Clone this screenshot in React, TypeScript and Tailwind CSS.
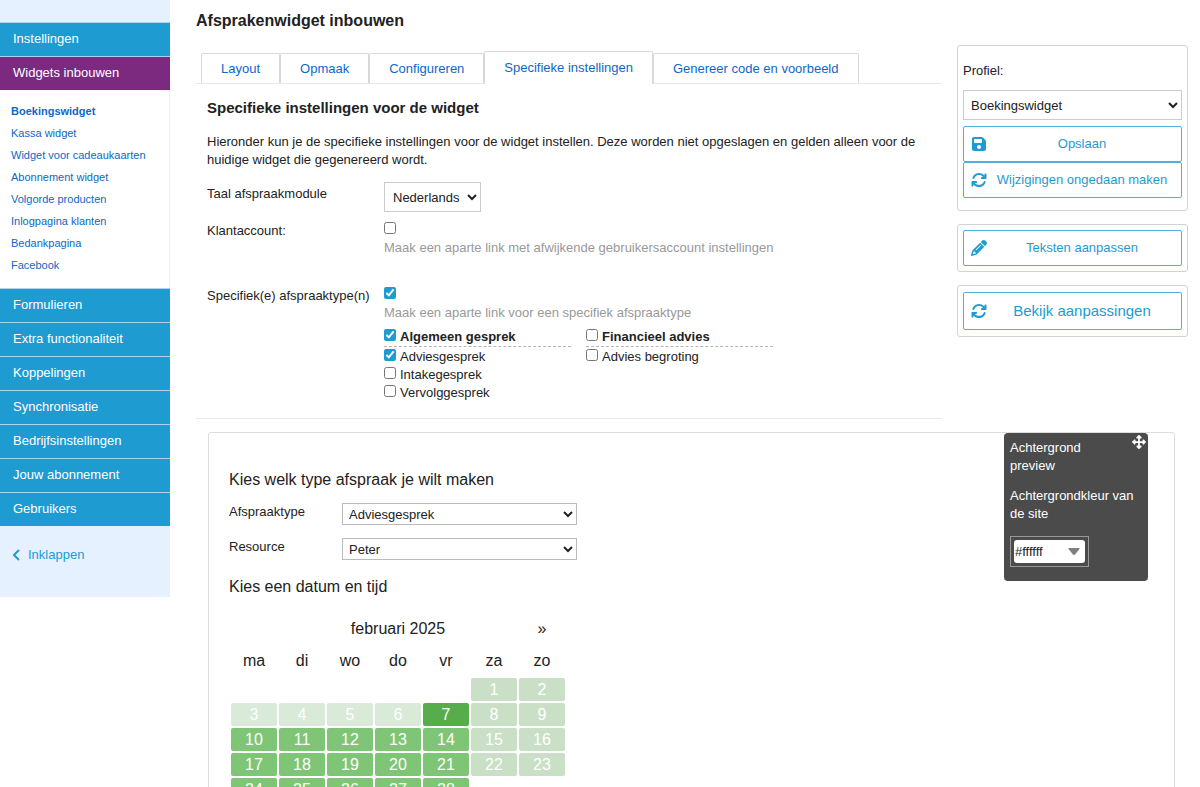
import React, { useState } from "react";
import { FaArrowsRotate, FaFloppyDisk, FaPencil, FaUpDownLeftRight } from "react-icons/fa6";

const SUB_LINKS = [
  "Boekingswidget",
  "Kassa widget",
  "Widget voor cadeaukaarten",
  "Abonnement widget",
  "Volgorde producten",
  "Inlogpagina klanten",
  "Bedankpagina",
  "Facebook",
];

const MENU_ITEMS = [
  "Formulieren",
  "Extra functionaliteit",
  "Koppelingen",
  "Synchronisatie",
  "Bedrijfsinstellingen",
  "Jouw abonnement",
  "Gebruikers",
];

const TABS = [
  "Layout",
  "Opmaak",
  "Configureren",
  "Specifieke instellingen",
  "Genereer code en voorbeeld",
];

const TYPE_GROUPS = [
  {
    name: "Algemeen gesprek",
    checked: true,
    types: [
      { name: "Adviesgesprek", checked: true },
      { name: "Intakegesprek", checked: false },
      { name: "Vervolggesprek", checked: false },
    ],
  },
  {
    name: "Financieel advies",
    checked: false,
    types: [{ name: "Advies begroting", checked: false }],
  },
];

const DAYS = ["ma", "di", "wo", "do", "vr", "za", "zo"];

const WEEKS = [
  [0, 0, 0, 0, 0, 1, 2],
  [3, 4, 5, 6, 7, 8, 9],
  [10, 11, 12, 13, 14, 15, 16],
  [17, 18, 19, 20, 21, 22, 23],
  [24, 25, 26, 27, 28, 0, 0],
];

const TODAY = 7;

const dayColor = (day: number, column: number) => {
  if (column > 4) return "bg-[#c9e0c6]";
  if (day < TODAY) return "bg-[#d9ead8]";
  if (day === TODAY) return "bg-[#57ad4b]";
  return "bg-[#7fc576]";
};

const MenuItem = ({ label, active }: { label: string; active?: boolean }) => (
  <a
    href="#"
    className={`block h-[34px] border-t border-[#a9d6ec] px-[13px] text-[13px] leading-[32px] text-white ${
      active ? "bg-[#7b2a80]" : "bg-[#1e9bd1]"
    }`}
  >
    {label}
  </a>
);

const Sidebar = () => (
  <nav className="w-[170px] shrink-0 self-start bg-[#e6f1ff] pt-[22px] pb-[33px]">
    <MenuItem label="Instellingen" />
    <MenuItem label="Widgets inbouwen" active />
    <ul className="border-r border-[#e6f1ff] bg-white pt-[10px] pb-3">
      {SUB_LINKS.map((link, i) => (
        <li key={link}>
          <a
            href="#"
            className={`block px-[11px] text-[11px] leading-[22px] text-[#0b68cb] ${
              i === 0 ? "font-bold" : ""
            }`}
          >
            {link}
          </a>
        </li>
      ))}
    </ul>
    {MENU_ITEMS.map((item) => (
      <MenuItem key={item} label={item} />
    ))}
    <button className="mt-[20px] flex items-center gap-2 px-3 text-[13px] leading-[18px] text-[#1e9bd1]">
      <svg width="8" height="12" viewBox="0 0 8 12" fill="none" stroke="currentColor" strokeWidth="2">
        <path d="M7 1 2 6l5 5" />
      </svg>
      Inklappen
    </button>
  </nav>
);

type CheckProps = {
  id: string;
  defaultChecked?: boolean;
  label?: string;
  bold?: boolean;
};

const Check = ({ id, defaultChecked, label, bold }: CheckProps) => (
  <div className="flex items-start gap-1 leading-[18px]">
    <input
      id={id}
      type="checkbox"
      defaultChecked={defaultChecked}
      className={`h-3 w-3 accent-[#1e9bd1] ${label ? "mt-px" : ""}`}
    />
    {label && (
      <label htmlFor={id} className={bold ? "font-bold" : ""}>
        {label}
      </label>
    )}
  </div>
);

const Tabs = () => {
  const [active, setActive] = useState(3);

  return (
    <div className="flex items-end border-b border-[#e8e8e8] pl-[5px]">
      {TABS.map((tab, i) => (
        <button
          key={tab}
          onClick={() => setActive(i)}
          className={`rounded-t-[2px] border border-b-0 border-[#d8d8d8] px-[19px] text-[13px] text-[#0b68cb] ${
            i === active ? "-mb-px h-[33px] bg-white pb-px" : "h-[30px]"
          }`}
        >
          {tab}
        </button>
      ))}
    </div>
  );
};

const Settings = () => (
  <section className="border-b border-[#e8e8e8] px-[11px] pb-[16px]">
    <h2 className="mt-[14px] text-[15px] leading-[20px] font-bold">
      Specifieke instellingen voor de widget
    </h2>
    <p className="mt-[15px] leading-[18px]">
      Hieronder kun je de specifieke instellingen voor de widget instellen. Deze
      worden niet opgeslagen en gelden alleen voor de huidige widget die
      gegenereerd wordt.
    </p>
    <div className="mt-[13px] grid grid-cols-[177px_1fr] leading-[18px]">
      <label htmlFor="taal" className="pt-[3px]">
        Taal afspraakmodule
      </label>
      <select
        id="taal"
        className="h-[30px] w-[97px] border border-[#cccccc] bg-white pl-1"
      >
        <option>Nederlands</option>
      </select>

      <label htmlFor="klantaccount" className="mt-[10px]">
        Klantaccount:
      </label>
      <div className="mt-[10px]">
        <Check id="klantaccount" />
        <p className="mt-[5px] text-[#999999]">
          Maak een aparte link met afwijkende gebruikersaccount instellingen
        </p>
      </div>

      <label htmlFor="specifiek" className="mt-[30px]">
        Specifiek(e) afspraaktype(n)
      </label>
      <div className="mt-[30px]">
        <Check id="specifiek" defaultChecked />
        <p className="mt-[5px] text-[#999999]">
          Maak een aparte link voor een specifiek afspraaktype
        </p>
        <div className="mt-[6px] flex gap-[15px]">
          {TYPE_GROUPS.map((group) => (
            <div key={group.name} className="w-[187px]">
              <div className="mb-px border-b border-dashed border-[#b5b5b5]">
                <Check id={group.name} label={group.name} defaultChecked={group.checked} bold />
              </div>
              {group.types.map((type) => (
                <Check key={type.name} id={type.name} label={type.name} defaultChecked={type.checked} />
              ))}
            </div>
          ))}
        </div>
      </div>
    </div>
  </section>
);

type ActionProps = {
  icon: React.ReactNode;
  label: string;
  large?: boolean;
};

const ActionButton = ({ icon, label, large }: ActionProps) => (
  <button
    className={`flex w-full items-center rounded-[2px] border border-[#4fb0db] pr-1 pl-[7px] text-[#1e9bd1] ${
      large ? "h-[38px] text-[15px]" : "h-[36px] text-[13px]"
    }`}
  >
    {icon}
    <span className="flex-1 text-center">{label}</span>
  </button>
);

const ProfilePanel = () => (
  <aside className="flex w-[231px] shrink-0 flex-col gap-[13px] pt-[45px]">
    <div className="rounded-[3px] border border-[#d3d3d3] px-[5px] pt-4 pb-3">
      <label htmlFor="profiel" className="block leading-[18px]">
        Profiel:
      </label>
      <select
        id="profiel"
        className="mt-[10px] mb-[6px] block h-[30px] w-full border border-[#cccccc] bg-white pl-[3px]"
      >
        <option>Boekingswidget</option>
      </select>
      <ActionButton icon={<FaFloppyDisk size={16} />} label="Opslaan" />
      <ActionButton icon={<FaArrowsRotate size={16} />} label="Wijzigingen ongedaan maken" />
    </div>
    <div className="rounded-[3px] border border-[#d3d3d3] p-[5px]">
      <ActionButton icon={<FaPencil size={16} />} label="Teksten aanpassen" />
    </div>
    <div className="rounded-[3px] border border-[#d3d3d3] px-[5px] py-[6px]">
      <ActionButton icon={<FaArrowsRotate size={16} />} label="Bekijk aanpassingen" large />
    </div>
  </aside>
);

const Calendar = () => (
  <table className="mt-[14px] border-separate border-spacing-x-[2px] border-spacing-y-[2px] text-center text-[16px]">
    <thead>
      <tr>
        <th />
        <th colSpan={5} className="h-[30px] font-normal">
          februari 2025
        </th>
        <th className="font-normal">
          <button aria-label="Volgende maand">»</button>
        </th>
      </tr>
      <tr>
        {DAYS.map((day) => (
          <th key={day} className="h-[30px] w-[46px] font-normal">
            {day}
          </th>
        ))}
      </tr>
    </thead>
    <tbody>
      {WEEKS.map((week, i) => (
        <tr key={i}>
          {week.map((day, column) => (
            <td key={column} className="h-[23px] w-[46px] p-0">
              {day > 0 && (
                <button
                  className={`block h-[23px] w-full rounded-[2px] leading-[21px] text-white ${dayColor(day, column)}`}
                >
                  {day}
                </button>
              )}
            </td>
          ))}
        </tr>
      ))}
    </tbody>
  </table>
);

const BackgroundPicker = () => {
  const [color, setColor] = useState("#ffffff");

  return (
    <div className="absolute top-0 right-[26px] w-[144px] rounded-[4px] bg-[#4b4b4b] px-[6px] pt-[6px] pb-[14px] leading-[18px] text-white">
      <FaUpDownLeftRight size={14} className="absolute top-[2px] right-[2px]" />
      <p className="pr-10">Achtergrond preview</p>
      <label htmlFor="achtergrond" className="mt-3 block">
        Achtergrondkleur van de site
      </label>
      <div className="mt-[13px] w-[79px] border border-[#999999] p-[3px]">
        <div className="flex h-[23px] items-center rounded-[3px] bg-white pr-[5px]">
          <input
            id="achtergrond"
            value={color}
            onChange={(e) => setColor(e.target.value)}
            className="w-full min-w-0 pl-px text-[13px] text-[#222222] outline-none"
          />
          <svg width="12" height="7" viewBox="0 0 12 7" className="shrink-0 fill-[#808080]">
            <path d="M1 0h10q1 0 .5 1L7 6.500q-1 1-2 0L.500 1Q0 0 1 0z" />
          </svg>
        </div>
      </div>
    </div>
  );
};

const Preview = () => (
  <section className="relative mt-[13px] mr-[25px] ml-[38px] rounded-[3px] border border-[#dddddd] px-[20px] pt-[36px] pb-10">
    <h2 className="text-[16px] leading-[22px]">Kies welk type afspraak je wilt maken</h2>
    <div className="mt-3 grid grid-cols-[113px_235px] gap-y-[13px] leading-[18px]">
      <label htmlFor="afspraaktype">Afspraaktype</label>
      <select id="afspraaktype" className="h-[22px] border border-[#bbbbbb] bg-white pl-[2px]">
        <option>Adviesgesprek</option>
      </select>
      <label htmlFor="resource">Resource</label>
      <select id="resource" className="h-[22px] border border-[#bbbbbb] bg-white pl-[2px]">
        <option>Peter</option>
      </select>
    </div>
    <h2 className="mt-4 text-[16px] leading-[22px]">Kies een datum en tijd</h2>
    <Calendar />
    <BackgroundPicker />
  </section>
);

const App = () => {
  return (
    <div className="flex min-h-screen bg-white font-['Liberation_Sans',Arial,sans-serif] text-[13px] text-[#222222]">
      <Sidebar />
      <main className="min-w-0 flex-1">
        <div className="flex gap-[15px] pr-3 pl-[26px]">
          <div className="min-w-0 flex-1">
            <h1 className="mt-[10px] mb-[20px] text-[16px] leading-[21px] font-bold">
              Afsprakenwidget inbouwen
            </h1>
            <Tabs />
            <Settings />
          </div>
          <ProfilePanel />
        </div>
        <Preview />
      </main>
    </div>
  );
};

export default App;
